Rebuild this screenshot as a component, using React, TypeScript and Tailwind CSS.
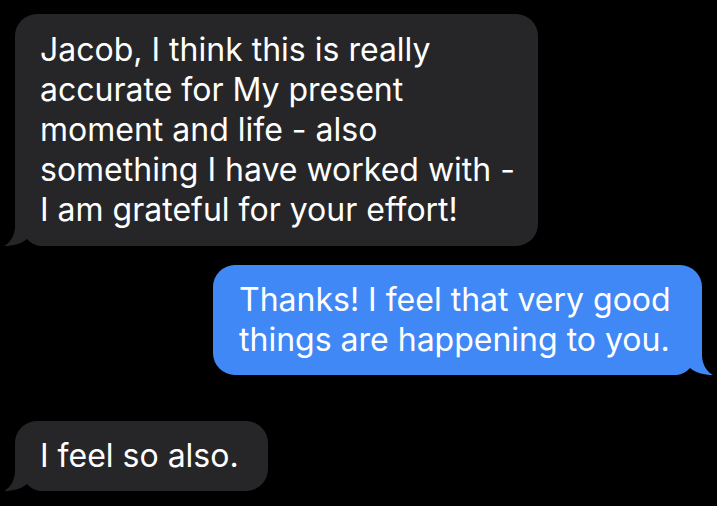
import React from "react";

const DARK = "#262628";
const BLUE = "#3f88f6";

// iMessage-style tail; covers the bubble's bottom corner (radius 40 there)
function Tail({ color, side }: { color: string; side: "left" | "right" }) {
  return (
    <svg
      width="55"
      height="44"
      viewBox="0 0 55 44"
      className={
        side === "left"
          ? "absolute bottom-0 left-[-11px]"
          : "absolute bottom-0 right-[-11px] -scale-x-100"
      }
    >
      <path
        d="M11 0 L55 0 L55 44 L36 44 C31 43.5 26.5 41 23 37 C18 41.5 9 44 0 44 C6 41 10.5 34 11 25 Z"
        fill={color}
      />
    </svg>
  );
}

function Bubble({
  lines,
  color,
  side,
  cls,
}: {
  lines: string[];
  color: string;
  side: "left" | "right";
  cls: string;
}) {
  return (
    <div
      className={`relative rounded-[22px] text-[32px] leading-[40px] text-white ${
        side === "left" ? "rounded-bl-[40px]" : "rounded-br-[40px]"
      } ${cls}`}
      style={{ background: color }}
    >
      {lines.map((l, i) => (
        <div key={i} className="relative z-10 whitespace-nowrap">
          {l}
        </div>
      ))}
      <Tail color={color} side={side} />
    </div>
  );
}

export default function App() {
  return (
    <div className="h-[506px] w-[717px] overflow-hidden bg-black font-['Inter',sans-serif]">
      <div className="flex flex-col pl-[15px] pr-[15px] pt-[14px]">
        <Bubble
          side="left"
          color={DARK}
          cls="w-[523px] self-start py-4 pl-[25px]"
          lines={[
            "Jacob, I think this is really",
            "accurate for My present",
            "moment and life - also",
            "something I have worked with -",
            "I am grateful for your effort!",
          ]}
        />
        <div className="mt-[19px] self-end">
          <Bubble
            side="right"
            color={BLUE}
            cls="w-[489px] py-[15px] pl-[26px]"
            lines={["Thanks! I feel that very good", "things are happening to you."]}
          />
        </div>
        <div className="mt-[46px] self-start">
          <Bubble
            side="left"
            color={DARK}
            cls="w-[253px] py-[15px] pl-[25px]"
            lines={["I feel so also."]}
          />
        </div>
      </div>
    </div>
  );
}
